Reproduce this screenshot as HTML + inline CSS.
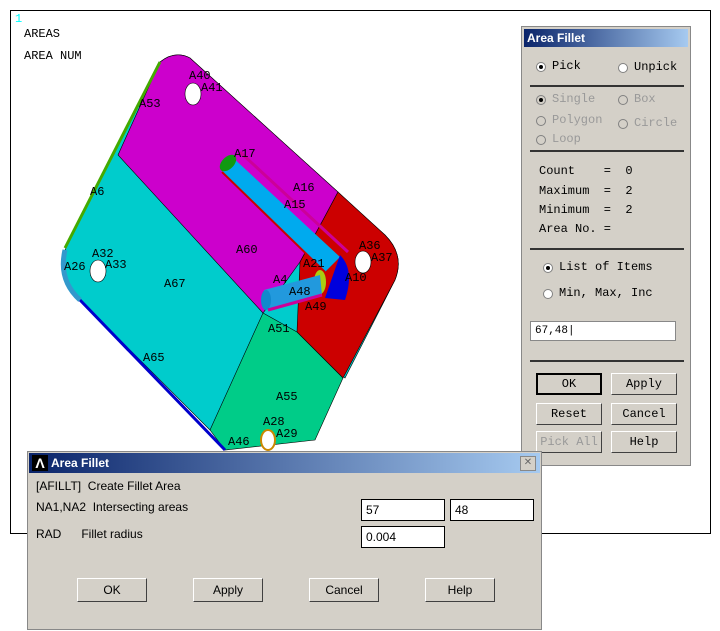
<!DOCTYPE html>
<html><head><style>
body{margin:0;width:720px;height:631px;background:#fff;position:relative;overflow:hidden;font-family:"Liberation Mono",monospace}
.frame{position:absolute;left:10px;top:10px;width:699px;height:522px;border:1px solid #000}
.panel{position:absolute;left:521px;top:26px;width:170px;height:440px;background:#d4d0c8;border:1px solid #888;box-sizing:border-box}
.tb{position:absolute;left:2px;top:2px;right:2px;height:18px;background:linear-gradient(90deg,#0a246a,#a6caf0);color:#fff;font:bold 12px "Liberation Sans",sans-serif;line-height:18px;padding-left:3px}
.m{position:absolute;font:12px "Liberation Mono",monospace;color:#000;white-space:pre}
.g{color:#999}
.rad{position:absolute;width:10px;height:10px;border-radius:50%;background:#fff;border:1px solid #808080;box-sizing:border-box}
.rad.on::after{content:"";position:absolute;left:2px;top:2px;width:4px;height:4px;border-radius:50%;background:#000}
.rad.gd{background:#d4d0c8}
.sep{position:absolute;left:8px;width:154px;height:2px;background:#333}
.btn{position:absolute;width:66px;height:22px;background:#d4d0c8;border:1px solid;border-color:#fff #404040 #404040 #fff;box-sizing:border-box;text-align:center;font:12px "Liberation Mono",monospace;line-height:20px}
.dlg{position:absolute;left:27px;top:451px;width:515px;height:179px;background:#d4d0c8;border:1px solid #888;box-sizing:border-box}
.s{position:absolute;font:12px "Liberation Sans",sans-serif;color:#000;white-space:pre}
.inp{position:absolute;background:#fff;border:1px solid #000;height:22px;box-sizing:border-box;font:12px "Liberation Sans",sans-serif;padding:3px 4px}
.b2{position:absolute;width:70px;height:24px;background:#d4d0c8;border:1px solid;border-color:#fff #404040 #404040 #fff;box-sizing:border-box;text-align:center;font:12px "Liberation Sans",sans-serif;line-height:22px}
</style></head><body>
<div class="frame"></div>
<div class="m" style="left:15px;top:12px;color:#0ff;font-size:12px">1</div>
<div class="m" style="left:24px;top:27px">AREAS</div>
<div class="m" style="left:24px;top:49px">AREA NUM</div>
<svg style="position:absolute;left:0;top:0" width="720" height="631">
<path d="M160,62 Q175,50 190,58 L385,235 Q405,255 395,280 L345,378 L292,330 L210,430 L80,300 Q60,280 65,250 Z" fill="#00cccc" stroke="#000" stroke-width="0.6"/>
<path d="M160,62 Q175,50 190,58 L338,192 L323,220 L300,262 L263,313 L118,155 Z" fill="#cc00cc" stroke="#000" stroke-width="0.6"/>
<path d="M338,192 L385,235 Q405,255 395,280 L343,378 L297,332 L300,262 L323,220 Z" fill="#cc0000" stroke="#000" stroke-width="0.6"/>
<path d="M263,313 L297,332 L343,378 L315,440 L225,450 L210,430 Z" fill="#00cc88" stroke="#000" stroke-width="0.6"/>
<path d="M160,62 L65,248" stroke="#44aa00" stroke-width="3" fill="none"/>
<path d="M80,300 L225,450" stroke="#0000cc" stroke-width="3" fill="none"/>
<path d="M65,250 Q58,280 80,300" stroke="#3399cc" stroke-width="5" fill="none"/>
<path d="M230,155 L340,257 L325,272 L222,172 Z" fill="#00aaee"/>
<path d="M222,172 L325,272" stroke="#cc0000" stroke-width="2"/>
<path d="M240,152 L348,252" stroke="#cc0099" stroke-width="3"/>
<ellipse cx="228" cy="163" rx="6" ry="10" transform="rotate(45 228 163)" fill="#119911"/>
<path d="M340,255 Q355,270 345,300 L325,298 Z" fill="#0000dd"/>
<ellipse cx="320" cy="282" rx="6" ry="12" fill="#aacc11"/>
<path d="M264,290 L320,275 L322,295 L268,310 Z" fill="#2299dd"/>
<ellipse cx="266" cy="300" rx="5" ry="10" fill="#1188cc"/>
<path d="M268,310 L322,295" stroke="#cc0099" stroke-width="3"/>
<ellipse cx="193" cy="94" rx="8" ry="11" fill="#fff" stroke="#000" stroke-width="0.6"/>
<ellipse cx="98" cy="271" rx="8" ry="11" fill="#fff" stroke="#000" stroke-width="0.6"/>
<ellipse cx="363" cy="262" rx="8" ry="11" fill="#fff" stroke="#000" stroke-width="0.6"/>
<ellipse cx="268" cy="440" rx="7" ry="10" fill="#fff" stroke="#cc8800" stroke-width="2"/>
<g font-family="Liberation Mono,monospace" font-size="12" fill="#000">
<text x="189" y="79">A40</text><text x="201" y="91">A41</text><text x="139" y="107">A53</text>
<text x="234" y="157">A17</text><text x="293" y="191">A16</text><text x="284" y="208">A15</text>
<text x="90" y="195">A6</text><text x="236" y="253">A60</text><text x="359" y="249">A36</text><text x="371" y="261">A37</text>
<text x="92" y="257">A32</text><text x="64" y="270">A26</text><text x="105" y="268">A33</text><text x="164" y="287">A67</text>
<text x="303" y="267">A21</text><text x="273" y="283">A4</text><text x="345" y="281">A10</text><text x="289" y="295">A48</text>
<text x="305" y="310">A49</text><text x="268" y="332">A51</text><text x="143" y="361">A65</text><text x="276" y="400">A55</text>
<text x="263" y="425">A28</text><text x="276" y="437">A29</text><text x="228" y="445">A46</text>
</g>
</svg>

<div class="panel">
<div class="tb">Area Fillet</div>
<div class="rad on" style="left:14px;top:35px"></div><div class="m" style="left:30px;top:32px">Pick</div>
<div class="rad" style="left:96px;top:36px"></div><div class="m" style="left:112px;top:33px">Unpick</div>
<div class="sep" style="top:58px"></div>
<div class="rad on gd" style="left:14px;top:68px"></div><div class="m g" style="left:30px;top:65px">Single</div>
<div class="rad gd" style="left:96px;top:68px"></div><div class="m g" style="left:112px;top:65px">Box</div>
<div class="rad gd" style="left:14px;top:89px"></div><div class="m g" style="left:30px;top:86px">Polygon</div>
<div class="rad gd" style="left:96px;top:92px"></div><div class="m g" style="left:112px;top:89px">Circle</div>
<div class="rad gd" style="left:14px;top:108px"></div><div class="m g" style="left:30px;top:105px">Loop</div>
<div class="sep" style="top:123px"></div>
<div class="m" style="left:17px;top:137px">Count    =  0</div>
<div class="m" style="left:17px;top:157px">Maximum  =  2</div>
<div class="m" style="left:17px;top:176px">Minimum  =  2</div>
<div class="m" style="left:17px;top:195px">Area No. =</div>
<div class="sep" style="top:221px"></div>
<div class="rad on" style="left:21px;top:236px"></div><div class="m" style="left:37px;top:233px">List of Items</div>
<div class="rad" style="left:21px;top:262px"></div><div class="m" style="left:37px;top:259px">Min, Max, Inc</div>
<div style="position:absolute;left:8px;top:294px;width:146px;height:20px;background:#fff;border:1px solid #888;box-sizing:border-box;font:11px 'Liberation Mono',monospace;padding:3px 4px">67,48|</div>
<div class="sep" style="top:333px"></div>
<div class="btn" style="left:14px;top:346px;border:2px solid #000;line-height:18px">OK</div>
<div class="btn" style="left:89px;top:346px">Apply</div>
<div class="btn" style="left:14px;top:376px">Reset</div>
<div class="btn" style="left:89px;top:376px">Cancel</div>
<div class="btn g" style="left:14px;top:404px">Pick All</div>
<div class="btn" style="left:89px;top:404px">Help</div>
</div>

<div class="dlg">
<div class="tb" style="left:1px;right:1px;top:1px;padding-left:22px;height:20px;line-height:20px">Area Fillet</div>
<div style="position:absolute;left:4px;top:3px;width:16px;height:16px;background:#000;color:#fff;font:bold 14px 'Liberation Sans';text-align:center;line-height:16px">Λ</div>
<div style="position:absolute;right:5px;top:4px;width:14px;height:13px;background:#d4d0c8;border:1px solid #888;font:10px 'Liberation Sans';text-align:center;line-height:12px;color:#666">✕</div>
<div class="s" style="left:8px;top:27px">[AFILLT]  Create Fillet Area</div>
<div class="s" style="left:8px;top:48px">NA1,NA2  Intersecting areas</div>
<div class="s" style="left:8px;top:75px">RAD      Fillet radius</div>
<div class="inp" style="left:333px;top:47px;width:84px">57</div>
<div class="inp" style="left:422px;top:47px;width:84px">48</div>
<div class="inp" style="left:333px;top:74px;width:84px">0.004</div>
<div class="b2" style="left:49px;top:126px">OK</div>
<div class="b2" style="left:165px;top:126px">Apply</div>
<div class="b2" style="left:281px;top:126px">Cancel</div>
<div class="b2" style="left:397px;top:126px">Help</div>
</div>
</body></html>
